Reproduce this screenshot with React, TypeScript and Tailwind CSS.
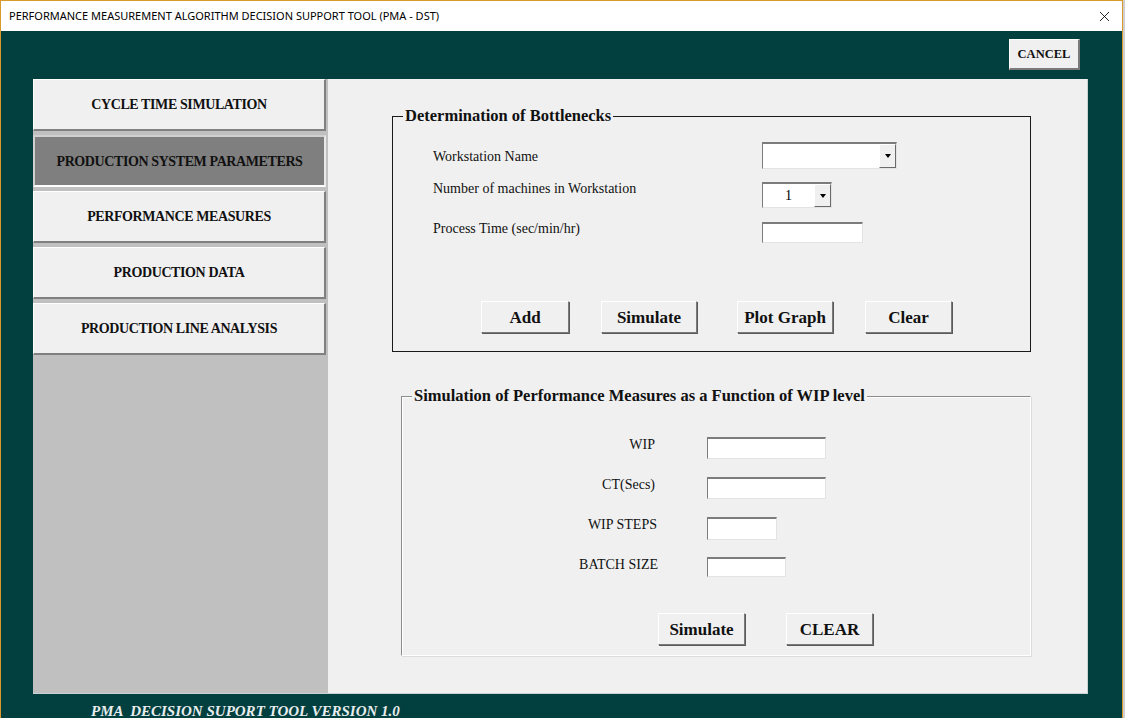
import { X } from "lucide-react";

const serif = "font-['Liberation_Serif','Times_New_Roman',serif]";

function Btn({ label, w }: { label: string; w: string }) {
  return (
    <button
      className={`${w} h-[32px] shrink-0 bg-[#f0f0f0] border border-t-white border-l-white border-r-[#7a7a7a] border-b-[#7a7a7a] shadow-[1px_1px_0_#5a5a5a] ${serif} text-[17px] font-bold text-[#111] leading-none`}
    >
      {label}
    </button>
  );
}

function TextBox({ w, h }: { w: string; h: string }) {
  return (
    <div
      className={`${w} ${h} shrink-0 bg-white border-t-2 border-l border-t-[#7c7c7c] border-l-[#7c7c7c] border-r border-b border-r-[#e3e3e3] border-b-[#e3e3e3]`}
    />
  );
}

function Combo({ w, h, value }: { w: string; h: string; value?: string }) {
  return (
    <div
      className={`${w} ${h} shrink-0 flex bg-white border-t-2 border-l border-t-[#7c7c7c] border-l-[#7c7c7c] border-r border-b border-r-[#e3e3e3] border-b-[#e3e3e3]`}
    >
      <div className={`flex-1 flex items-center justify-center ${serif} text-[14px] text-black`}>{value}</div>
      <div className="w-[17px] h-full bg-[#f0f0f0] border border-t-white border-l-white border-r-[#6a6a6a] border-b-[#6a6a6a] flex items-center justify-center">
        <div className="w-0 h-0 border-l-[3.5px] border-r-[3.5px] border-t-[4px] border-l-transparent border-r-transparent border-t-black" />
      </div>
    </div>
  );
}

function NavButton({ label, active }: { label: string; active?: boolean }) {
  return (
    <div
      className={`h-[52px] w-[293px] shrink-0 flex items-center justify-center ${serif} text-[14px] font-bold tracking-[-0.4px] text-[#111] ${
        active
          ? "bg-[#7f7f7f] border-2 border-t-[#d0d0d0] border-l-[#d0d0d0] border-r-[#e8e8e8] border-b-white"
          : "bg-[#f0f0f0] border border-t-white border-l-white border-r-2 border-b-2 border-r-[#808080] border-b-[#808080]"
      }`}
    >
      {label}
    </div>
  );
}

export default function App() {
  return (
    <div className="w-[1125px] h-[718px] overflow-hidden flex bg-[#cfcfcf]">
      <div className="w-[1123px] h-[718px] shrink-0 flex flex-col border-l border-t border-r border-[#d99a2b] overflow-hidden">
        {/* title bar */}
        <div className="h-[30px] shrink-0 bg-white flex items-center justify-between pl-[8px] pr-[9px]">
          <span className="font-['Noto_Sans','Open_Sans',sans-serif] text-[11px] text-black">
            PERFORMANCE MEASUREMENT ALGORITHM DECISION SUPPORT TOOL (PMA - DST)
          </span>
          <X size={17} strokeWidth={1.2} className="text-black" />
        </div>

        <div className="flex-1 bg-[#023f3f] flex flex-col">
          <div className="h-[48px] shrink-0 flex justify-end pt-[8px] pr-[42px]">
            <button
              className={`w-[71px] h-[31px] bg-[#f0f0f0] border border-t-white border-l-white border-r-2 border-b-2 border-r-[#7a7a7a] border-b-[#7a7a7a] ${serif} text-[12.5px] font-bold text-[#111]`}
            >
              CANCEL
            </button>
          </div>

          <div className="ml-[32px] w-[1055px] h-[615px] shrink-0 flex border-r border-b border-r-[#c9d2d2] border-b-[#c9d2d2]">
            {/* sidebar */}
            <div className="w-[295px] bg-[#c0c0c0] flex flex-col gap-[4px]">
              <NavButton label="CYCLE TIME SIMULATION" />
              <NavButton label="PRODUCTION SYSTEM PARAMETERS" active />
              <NavButton label="PERFORMANCE MEASURES" />
              <NavButton label="PRODUCTION DATA" />
              <NavButton label="PRODUCTION LINE ANALYSIS" />
            </div>

            {/* content */}
            <div className="flex-1 bg-[#f0f0f0] pt-[37px]">
              {/* frame 1 */}
              <div className="relative ml-[64px] w-[639px] h-[236px] border border-[#1a1a1a]">
                <span className={`absolute -top-[11px] left-[10px] px-[2px] bg-[#f0f0f0] ${serif} text-[16.5px] font-bold text-[#111] leading-[20px]`}>
                  Determination of Bottlenecks
                </span>
                <div className={`pl-[40px] pt-[25px] ${serif} text-[14px] text-[#111]`}>
                  <div className="flex items-start h-[27px]">
                    <span className="w-[329px] pt-[7px] leading-[16px]">Workstation Name</span>
                    <Combo w="w-[135px]" h="h-[27px]" />
                  </div>
                  <div className="flex items-start h-[26px] mt-[13px]">
                    <span className="w-[329px] -mt-[1px] leading-[16px]">Number of machines in Workstation</span>
                    <Combo w="w-[70px]" h="h-[26px]" value="1" />
                  </div>
                  <div className="flex items-start h-[21px] mt-[14px]">
                    <span className="w-[329px] -mt-[1px] leading-[16px]">Process Time (sec/min/hr)</span>
                    <TextBox w="w-[101px]" h="h-[21px]" />
                  </div>
                  <div className="flex mt-[58px] ml-[48px]">
                    <Btn label="Add" w="w-[88px]" />
                    <div className="w-[32px]" />
                    <Btn label="Simulate" w="w-[96px]" />
                    <div className="w-[40px]" />
                    <Btn label="Plot Graph" w="w-[96px]" />
                    <div className="w-[32px]" />
                    <Btn label="Clear" w="w-[87px]" />
                  </div>
                </div>
              </div>

              {/* frame 2 */}
              <div className="relative mt-[44px] ml-[73px] w-[630px] h-[260px] border border-t-[#8c8c8c] border-l-[#8c8c8c] border-r-white border-b-white shadow-[inset_1px_1px_0_white,1px_1px_0_#dcdcdc]">
                <span className={`absolute -top-[11px] left-[10px] px-[2px] bg-[#f0f0f0] ${serif} text-[16.5px] font-bold text-[#111] leading-[20px]`}>
                  Simulation of Performance Measures as a Function of WIP level
                </span>
                <div className={`pt-[40px] ${serif} text-[14px] text-[#111]`}>
                  <div className="flex items-start h-[22px]">
                    <span className="w-[253px] text-right leading-[16px]">WIP</span>
                    <div className="w-[52px]" />
                    <TextBox w="w-[119px]" h="h-[22px]" />
                  </div>
                  <div className="flex items-start h-[22px] mt-[18px]">
                    <span className="w-[253px] text-right leading-[16px]">CT(Secs)</span>
                    <div className="w-[52px]" />
                    <TextBox w="w-[119px]" h="h-[22px]" />
                  </div>
                  <div className="flex items-start h-[23px] mt-[18px]">
                    <span className="w-[255px] text-right leading-[16px]">WIP STEPS</span>
                    <div className="w-[50px]" />
                    <TextBox w="w-[70px]" h="h-[23px]" />
                  </div>
                  <div className="flex items-start h-[20px] mt-[17px]">
                    <span className="w-[256px] text-right leading-[16px]">BATCH SIZE</span>
                    <div className="w-[49px]" />
                    <TextBox w="w-[79px]" h="h-[20px]" />
                  </div>
                  <div className="flex mt-[36px] ml-[256px]">
                    <Btn label="Simulate" w="w-[87px]" />
                    <div className="w-[41px]" />
                    <Btn label="CLEAR" w="w-[87px]" />
                  </div>
                </div>
              </div>
            </div>
          </div>

          <div className="pl-[90px] pt-[4px]">
            <span className={`${serif} italic font-bold text-[15px] text-[#e8eeee] whitespace-pre leading-[20px]`}>
              PMA  DECISION SUPORT TOOL VERSION 1.0
            </span>
          </div>
        </div>
      </div>
    </div>
  );
}
